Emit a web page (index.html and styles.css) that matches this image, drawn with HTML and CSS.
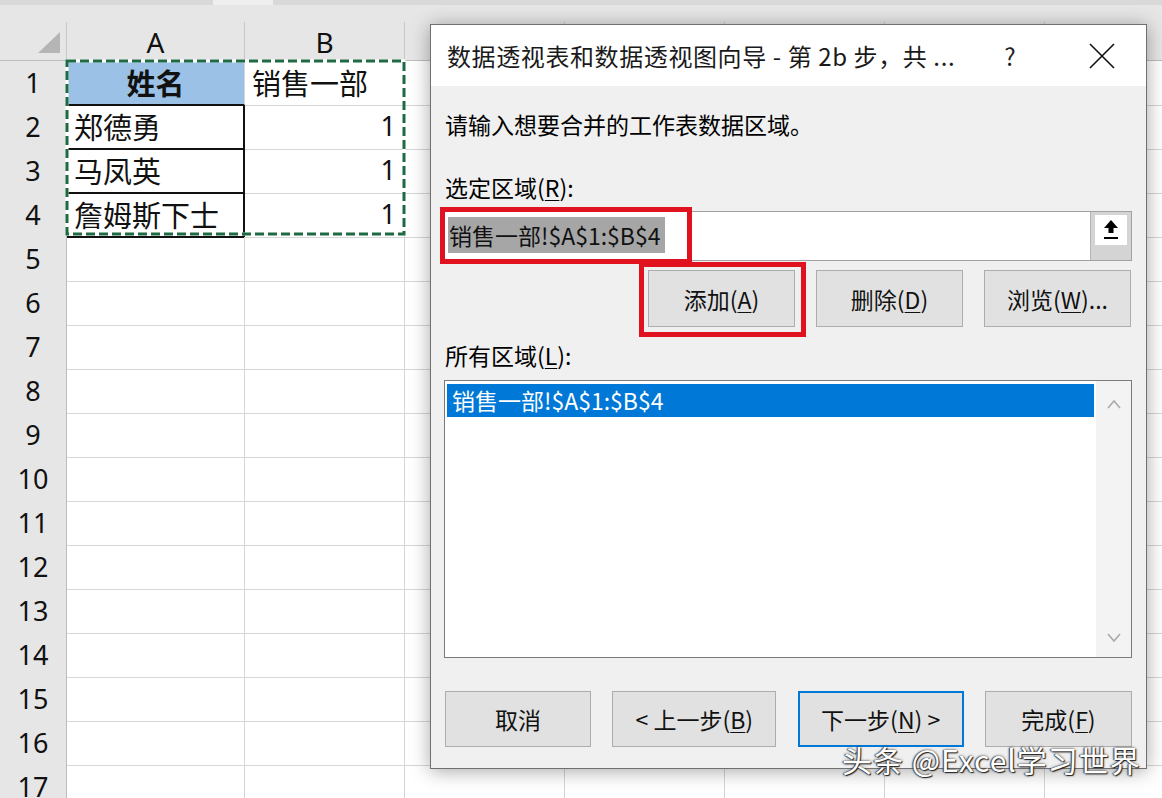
FILE: index.html
```html
<!DOCTYPE html>
<html lang="zh-CN">
<head>
  <meta charset="UTF-8" />
  <title>数据透视表和数据透视图向导</title>
  <link rel="stylesheet" href="styles.css">
</head>
<body>

  <div class="sheet">
    <div class="top-strip"><span class="seg"></span><span class="seg light"></span><span class="seg"></span></div>
    <div class="head-row">
      <div class="corner">
        <svg width="67" height="39" viewBox="0 0 67 39"><polygon points="60,10 60,31 38,31" fill="#b5b5b5"/></svg>
      </div>
      <div class="col-head">A</div>
      <div class="col-head">B</div>
      <div class="col-head"></div>
      <div class="col-head"></div>
      <div class="col-head"></div>
      <div class="col-head"></div>
      <div class="col-head"></div>
      <div class="col-head"></div>
    </div>

    <div id="rows">
      <div class="row">
        <div class="row-head">1</div>
        <div class="cell name-title">姓名</div>
        <div class="cell">销售一部</div>
        <div class="cell"></div><div class="cell"></div><div class="cell"></div><div class="cell"></div><div class="cell"></div><div class="cell"></div>
      </div>
      <div class="row">
        <div class="row-head">2</div>
        <div class="cell boxed">郑德勇</div>
        <div class="cell num">1</div>
        <div class="cell"></div><div class="cell"></div><div class="cell"></div><div class="cell"></div><div class="cell"></div><div class="cell"></div>
      </div>
      <div class="row">
        <div class="row-head">3</div>
        <div class="cell boxed">马凤英</div>
        <div class="cell num">1</div>
        <div class="cell"></div><div class="cell"></div><div class="cell"></div><div class="cell"></div><div class="cell"></div><div class="cell"></div>
      </div>
      <div class="row">
        <div class="row-head">4</div>
        <div class="cell boxed">詹姆斯下士</div>
        <div class="cell num">1</div>
        <div class="cell"></div><div class="cell"></div><div class="cell"></div><div class="cell"></div><div class="cell"></div><div class="cell"></div>
      </div>
    </div>

    <!-- copy range marquee -->
    <svg class="ants" width="342" height="178" viewBox="0 0 342 178">
      <rect x="2" y="2" width="337" height="173" fill="none" stroke="#fff" stroke-width="3"/>
      <rect x="2" y="2" width="337" height="173" fill="none" stroke="#1d6a43" stroke-width="3" stroke-dasharray="9 4"/>
    </svg>
  </div>

  <div class="dialog">
    <div class="title-bar">
      <div class="title">数据透视表和数据透视图向导 - 第 2b 步，共 ...</div>
      <div class="help">?</div>
      <div class="close">
        <svg width="26" height="26" viewBox="0 0 26 26"><path d="M1 1 L25 25 M25 1 L1 25" stroke="#111" stroke-width="1.6" fill="none"/></svg>
      </div>
    </div>

    <div class="dialog-body">
      <p class="intro">请输入想要合并的工作表数据区域。</p>

      <p class="label label-range">选定区域(<u>R</u>):</p>
      <div class="field">
        <div class="field-text"><span class="selected-text">销售一部!$A$1:$B$4</span></div>
        <div class="collapse-btn">
          <span class="collapse-face">
            <svg width="18" height="22" viewBox="0 0 18 22"><path d="M9 1 L16 9 L11.5 9 L11.5 14 L6.5 14 L6.5 9 L2 9 Z" fill="#000"/><rect x="2" y="18" width="14" height="2" fill="#000"/></svg>
          </span>
        </div>
      </div>

      <div class="actions">
        <div class="btn">添加(<u>A</u>)</div>
        <div class="btn">删除(<u>D</u>)</div>
        <div class="btn">浏览(<u>W</u>)...</div>
      </div>

      <p class="label label-all">所有区域(<u>L</u>):</p>
      <div class="list">
        <div class="items">
          <div class="item selected">销售一部!$A$1:$B$4</div>
        </div>
        <div class="scroll">
          <svg width="14" height="10" viewBox="0 0 14 10"><polyline points="1,9 7,2 13,9" fill="none" stroke="#a8a8a8" stroke-width="1.5"/></svg>
          <svg width="14" height="10" viewBox="0 0 14 10"><polyline points="1,1 7,8 13,1" fill="none" stroke="#a8a8a8" stroke-width="1.5"/></svg>
        </div>
      </div>

      <div class="footer">
        <div class="btn w-cancel">取消</div>
        <div class="btn w-back">&lt; 上一步(<u>B</u>)</div>
        <div class="btn w-next primary">下一步(<u>N</u>) &gt;</div>
        <div class="btn w-finish">完成(<u>F</u>)</div>
      </div>
    </div>

    <div class="mark mark-range"></div>
    <div class="mark mark-add"></div>
  </div>

  <div class="watermark">头条 @Excel学习世界</div>

<script>
  // 空白行 5 - 17
  const rows = document.getElementById('rows');
  for (let i = 5; i <= 17; i++) {
    const row = document.createElement('div');
    row.className = 'row';
    row.innerHTML = '<div class="row-head">' + i + '</div>' + '<div class="cell"></div>'.repeat(8);
    rows.appendChild(row);
  }
</script>

</body>
</html>
```

FILE: styles.css
```css
body {
  margin: 0;
  width: 1162px;
  height: 798px;
  overflow: hidden;
  position: relative;
  background: #fff;
  font-family: "Noto Sans CJK SC", sans-serif;
  color: #000;
}
p {
  margin: 0;
}

/* ---------- sheet ---------- */
.sheet {
  position: relative;
  width: 1162px;
  background: #e6e6e6;
}
.top-strip {
  display: flex;
  height: 5px;
  background: #e6e6e6;
}
.top-strip .seg {
  width: 213px;
  background: #d9d9d9;
}
.top-strip .seg.light {
  width: 60px;
  background: #efefef;
}
.top-strip .seg:last-child {
  flex: 1;
}
.head-row,
.row {
  display: grid;
  grid-template-columns: 67px 178px repeat(7, 160px);
}
.head-row {
  padding-top: 17px;
  height: 39px;
}
.corner,
.col-head {
  box-sizing: border-box;
  height: 39px;
  border-right: 1px solid #c8c8c8;
  border-bottom: 1px solid #bdbdbd;
  background: #e6e6e6;
}
.corner svg {
  display: block;
}
.col-head {
  text-align: center;
  font-family: "Noto Sans", sans-serif;
  font-size: 28px;
  line-height: 40px;
  color: #111;
}
.row {
  height: 44px;
  background: #fff;
}
.row-head {
  box-sizing: border-box;
  background: #e6e6e6;
  border-right: 1px solid #bdbdbd;
  border-bottom: 1px solid #d0d0d0;
  text-align: center;
  font-family: "Noto Sans", sans-serif;
  font-size: 27px;
  line-height: 44px;
  color: #111;
}
.cell {
  box-sizing: border-box;
  border-right: 1px solid #d6d6d6;
  border-bottom: 1px solid #d6d6d6;
  padding: 0 7px;
  font-size: 29px;
  line-height: 42px;
  white-space: nowrap;
  overflow: hidden;
  color: #111;
}
.cell.name-title {
  background: #9bc2e6;
  font-weight: bold;
  text-align: center;
  border-bottom: 2px solid #111;
}
.cell.boxed {
  border-right: 2px solid #111;
  border-bottom: 2px solid #111;
}
.cell.num {
  text-align: right;
  padding-right: 8px;
  font-family: "Noto Sans", sans-serif;
  font-size: 27px;
}
.ants {
  position: absolute;
  left: 65px;
  top: 59px;
}

/* ---------- dialog ---------- */
.dialog {
  position: absolute;
  left: 430px;
  top: 24px;
  width: 717px;
  height: 745px;
  box-sizing: border-box;
  border: 1px solid #707070;
  background: #f0f0f0;
  box-shadow: 0 2px 18px rgba(0, 0, 0, 0.35);
  display: flex;
  flex-direction: column;
}
.title-bar {
  height: 61px;
  background: #fff;
  display: flex;
  align-items: center;
  padding-left: 16px;
}
.title {
  flex: 1;
  font-size: 24px;
  letter-spacing: 0.6px;
  color: #1a1a1a;
  white-space: nowrap;
}
.help {
  width: 46px;
  text-align: center;
  font-size: 24px;
  color: #222;
}
.close {
  width: 89px;
  margin-left: 24px;
  display: flex;
  justify-content: center;
}
.close svg {
  display: block;
}
.dialog-body {
  flex: 1;
  padding: 0 14px 0 13px;
  font-size: 23px;
}
.intro {
  margin-top: 23px;
  line-height: 30px;
  padding-left: 1px;
}
.label {
  line-height: 30px;
  padding-left: 1px;
}
u {
  text-underline-offset: 3px;
  text-decoration-thickness: 1px;
}
.label-range {
  margin-top: 33px;
}
.field {
  margin-top: 9px;
  height: 50px;
  box-sizing: border-box;
  border: 1px solid #a2a2a2;
  background: #fff;
  display: flex;
}
.field-text {
  flex: 1;
  padding: 5px 0 0 3px;
}
.selected-text {
  display: inline-block;
  background: #a6a6a6;
  color: #111;
  line-height: 36px;
  padding: 0 4px 0 1px;
}
.collapse-btn {
  width: 41px;
  background: #d4d4d4;
  border-left: 1px solid #b4b4b4;
  padding: 3px 4px 0;
  box-sizing: border-box;
}
.collapse-face {
  display: flex;
  justify-content: center;
  align-items: center;
  height: 30px;
  background: #fff;
}
.actions {
  margin-top: 9px;
  display: flex;
  justify-content: flex-end;
  gap: 21px;
  padding-right: 1px;
}
.actions .btn {
  width: 147px;
}
.btn {
  box-sizing: border-box;
  height: 57px;
  background: #e1e1e1;
  border: 1px solid #adadad;
  display: flex;
  align-items: center;
  justify-content: center;
  font-size: 23px;
  color: #111;
  white-space: nowrap;
}
.btn.primary {
  border: 2px solid #0078d7;
}
.label-all {
  margin-top: 13px;
}
.list {
  margin-top: 10px;
  height: 278px;
  box-sizing: border-box;
  border: 1px solid #7a7a7a;
  background: #fff;
  display: flex;
}
.items {
  flex: 1;
  padding: 3px 2px 0 2px;
}
.item {
  height: 33px;
  line-height: 33px;
  padding-left: 5px;
}
.item.selected {
  background: #0078d7;
  color: #fff;
}
.scroll {
  width: 35px;
  background: #f3f3f3;
  display: flex;
  flex-direction: column;
  justify-content: space-between;
  align-items: center;
  padding: 18px 0 14px;
}
.scroll svg {
  display: block;
}
.footer {
  margin-top: 33px;
  display: flex;
  justify-content: space-between;
  padding-left: 1px;
}
.footer .btn {
  height: 56px;
}
.w-cancel { width: 146px; }
.w-back { width: 164px; }
.w-next { width: 166px; }
.w-finish { width: 147px; }

.mark {
  position: absolute;
  border: 5px solid #e0121f;
  box-sizing: border-box;
}
.mark-range {
  left: 9px;
  top: 182px;
  width: 252px;
  height: 57px;
}
.mark-add {
  left: 208px;
  top: 237px;
  width: 167px;
  height: 75px;
}

.watermark {
  position: absolute;
  left: 842px;
  top: 740px;
  font-size: 30px;
  line-height: 38px;
  letter-spacing: 1px;
  color: #fff;
  white-space: nowrap;
  text-shadow: 1px 1px 1px #222, -1px 0 1px #444, 0 0 3px rgba(0, 0, 0, 0.7);
}
```
